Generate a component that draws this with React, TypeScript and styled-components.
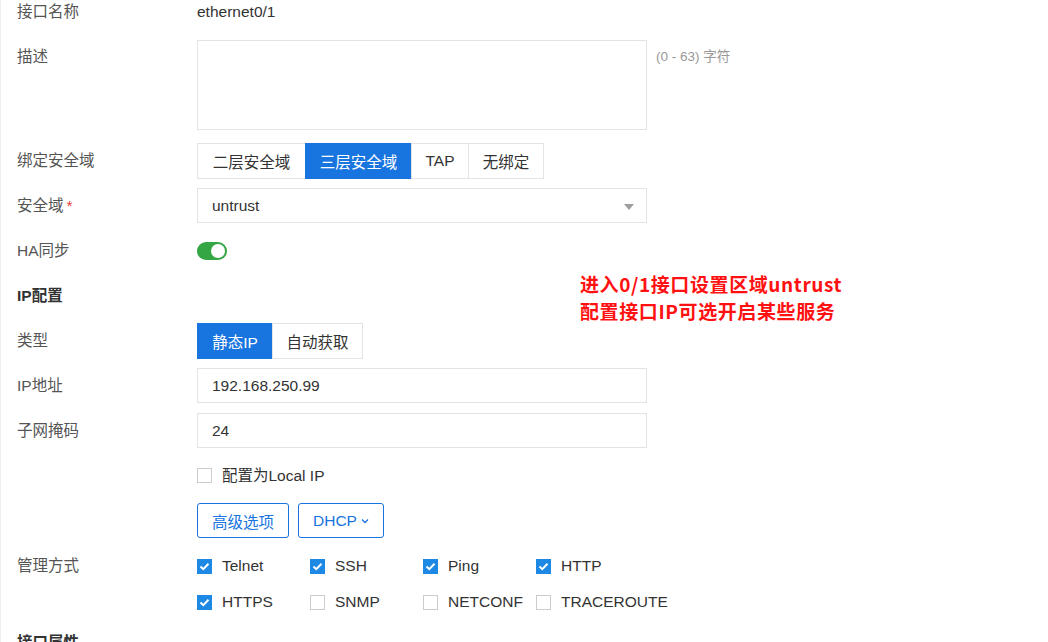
import React from "react";
import styled, { createGlobalStyle } from "styled-components";

const Global = createGlobalStyle`
  html, body { margin: 0; padding: 0; background: #fff; }
  body {
    font-family: "Liberation Sans", "Noto Sans CJK SC", sans-serif;
    font-size: 15.5px;
    color: #333;
    overflow: hidden;
  }
  * { box-sizing: border-box; }
`;

const Page = styled.div`
  position: relative;
  width: 1048px;
  height: 642px;
  overflow: hidden;
  border-left: 1px solid #eee;
  padding-left: 16px;
  display: flex;
  flex-direction: column;
`;

const Row = styled.div<{ $mt?: number; $h?: number; $top?: boolean }>`
  display: grid;
  grid-template-columns: 180px 1fr;
  align-items: ${(p) => (p.$top ? "start" : "center")};
  min-height: ${(p) => p.$h ?? 35}px;
  margin-top: ${(p) => p.$mt ?? 10}px;
`;

const Label = styled.div<{ $lh?: number }>`
  color: #555;
  line-height: ${(p) => p.$lh ?? 20}px;
  white-space: nowrap;
`;

const Required = styled.span`
  color: #e53935;
  margin-left: 3px;
`;

const Section = styled.div`
  font-weight: bold;
  color: #333;
  line-height: 20px;
`;

const Value = styled.div`
  color: #333;
  line-height: 20px;
`;

const Field = styled.div`
  display: flex;
  align-items: flex-start;
  gap: 9px;
`;

const TextArea = styled.div`
  width: 450px;
  height: 90px;
  border: 1px solid #e3e3e3;
  background: #fff;
`;

const Hint = styled.span`
  color: #999;
  font-size: 13.5px;
  line-height: 34px;
`;

const Group = styled.div`
  display: flex;
`;

const Seg = styled.div<{ $active?: boolean; $w: number }>`
  width: ${(p) => p.$w}px;
  height: 36px;
  display: flex;
  align-items: center;
  justify-content: center;
  border: 1px solid ${(p) => (p.$active ? "#1874de" : "#e3e3e3")};
  margin-left: -1px;
  &:first-child { margin-left: 0; }
  background: ${(p) => (p.$active ? "#1874de" : "#fff")};
  color: ${(p) => (p.$active ? "#fff" : "#333")};
  white-space: nowrap;
`;

const Input = styled.div`
  position: relative;
  width: 450px;
  height: 35px;
  border: 1px solid #e3e3e3;
  padding: 0 14px;
  display: flex;
  align-items: center;
  color: #333;
`;

const Caret = styled.span`
  position: absolute;
  right: 12px;
  top: 15px;
  width: 0;
  height: 0;
  border-left: 5px solid transparent;
  border-right: 5px solid transparent;
  border-top: 6px solid #9e9e9e;
`;

const Toggle = styled.div`
  position: relative;
  width: 30px;
  height: 18px;
  border-radius: 9px;
  background: #34a744;
  &::after {
    content: "";
    position: absolute;
    right: 2px;
    top: 2px;
    width: 14px;
    height: 14px;
    border-radius: 50%;
    background: #fff;
  }
`;

const Box = styled.span<{ $on?: boolean }>`
  width: 15px;
  height: 15px;
  flex: none;
  display: inline-flex;
  align-items: center;
  justify-content: center;
  background: ${(p) => (p.$on ? "#1e88e5" : "#fff")};
  border: 1px solid ${(p) => (p.$on ? "#1e88e5" : "#ccc")};
`;

const Check = styled.label`
  display: flex;
  align-items: center;
  gap: 10px;
  color: #333;
  line-height: 20px;
  white-space: nowrap;
`;

const Checks = styled.div`
  display: grid;
  grid-template-columns: repeat(4, 113px);
  grid-auto-rows: 36px;
  align-items: center;
`;

const Buttons = styled.div`
  display: flex;
  gap: 9px;
`;

const OutlineBtn = styled.div`
  height: 35px;
  padding: 0 14px;
  border: 1px solid #1874de;
  border-radius: 3px;
  color: #1874de;
  display: flex;
  align-items: center;
  gap: 4px;
  white-space: nowrap;
`;

const Note = styled.div`
  position: absolute;
  left: 579px;
  top: 270px;
  color: #ff1111;
  font-family: "Noto Sans CJK SC", "Liberation Sans", sans-serif;
  font-weight: bold;
  font-size: 19px;
  line-height: 27px;
  letter-spacing: 0.6px;
`;

const Tick = () => (
  <svg width="11" height="9" viewBox="0 0 11 9">
    <path d="M1.5 4.5 L4.3 7.2 L9.5 1.8" stroke="#fff" strokeWidth="2" fill="none" />
  </svg>
);

const Chevron = () => (
  <svg width="8" height="6" viewBox="0 0 8 6">
    <path d="M1 1.5 L4 4.5 L7 1.5" stroke="#1874de" strokeWidth="1.3" fill="none" />
  </svg>
);

const CheckItem = ({ on, text }: { on?: boolean; text: string }) => (
  <Check>
    <Box $on={on}>{on && <Tick />}</Box>
    {text}
  </Check>
);

export default function App() {
  return (
    <>
      <Global />
      <Page>
        <Row $mt={0} $h={24}>
          <Label>接口名称</Label>
          <Value>ethernet0/1</Value>
        </Row>
        <Row $mt={16} $h={90} $top>
          <Label $lh={34}>描述</Label>
          <Field>
            <TextArea />
            <Hint>(0 - 63) 字符</Hint>
          </Field>
        </Row>
        <Row $mt={13} $h={36}>
          <Label>绑定安全域</Label>
          <Group>
            <Seg $w={109}>二层安全域</Seg>
            <Seg $w={107} $active>三层安全域</Seg>
            <Seg $w={58}>TAP</Seg>
            <Seg $w={76}>无绑定</Seg>
          </Group>
        </Row>
        <Row $mt={9}>
          <Label>
            安全域<Required>*</Required>
          </Label>
          <Input>
            untrust
            <Caret />
          </Input>
        </Row>
        <Row>
          <Label>HA同步</Label>
          <Toggle />
        </Row>
        <Row>
          <Section>IP配置</Section>
          <div />
        </Row>
        <Row>
          <Label>类型</Label>
          <Group>
            <Seg $w={76} $active>静态IP</Seg>
            <Seg $w={91}>自动获取</Seg>
          </Group>
        </Row>
        <Row>
          <Label>IP地址</Label>
          <Input>192.168.250.99</Input>
        </Row>
        <Row>
          <Label>子网掩码</Label>
          <Input>24</Input>
        </Row>
        <Row>
          <div />
          <CheckItem text="配置为Local IP" />
        </Row>
        <Row>
          <div />
          <Buttons>
            <OutlineBtn>高级选项</OutlineBtn>
            <OutlineBtn>
              DHCP <Chevron />
            </OutlineBtn>
          </Buttons>
        </Row>
        <Row $mt={10} $h={72} $top>
          <Label $lh={36}>管理方式</Label>
          <Checks>
            <CheckItem on text="Telnet" />
            <CheckItem on text="SSH" />
            <CheckItem on text="Ping" />
            <CheckItem on text="HTTP" />
            <CheckItem on text="HTTPS" />
            <CheckItem text="SNMP" />
            <CheckItem text="NETCONF" />
            <CheckItem text="TRACEROUTE" />
          </Checks>
        </Row>
        <Row $mt={5}>
          <Section>接口属性</Section>
          <div />
        </Row>
        <Note>
          进入0/1接口设置区域untrust
          <br />
          配置接口IP可选开启某些服务
        </Note>
      </Page>
    </>
  );
}
